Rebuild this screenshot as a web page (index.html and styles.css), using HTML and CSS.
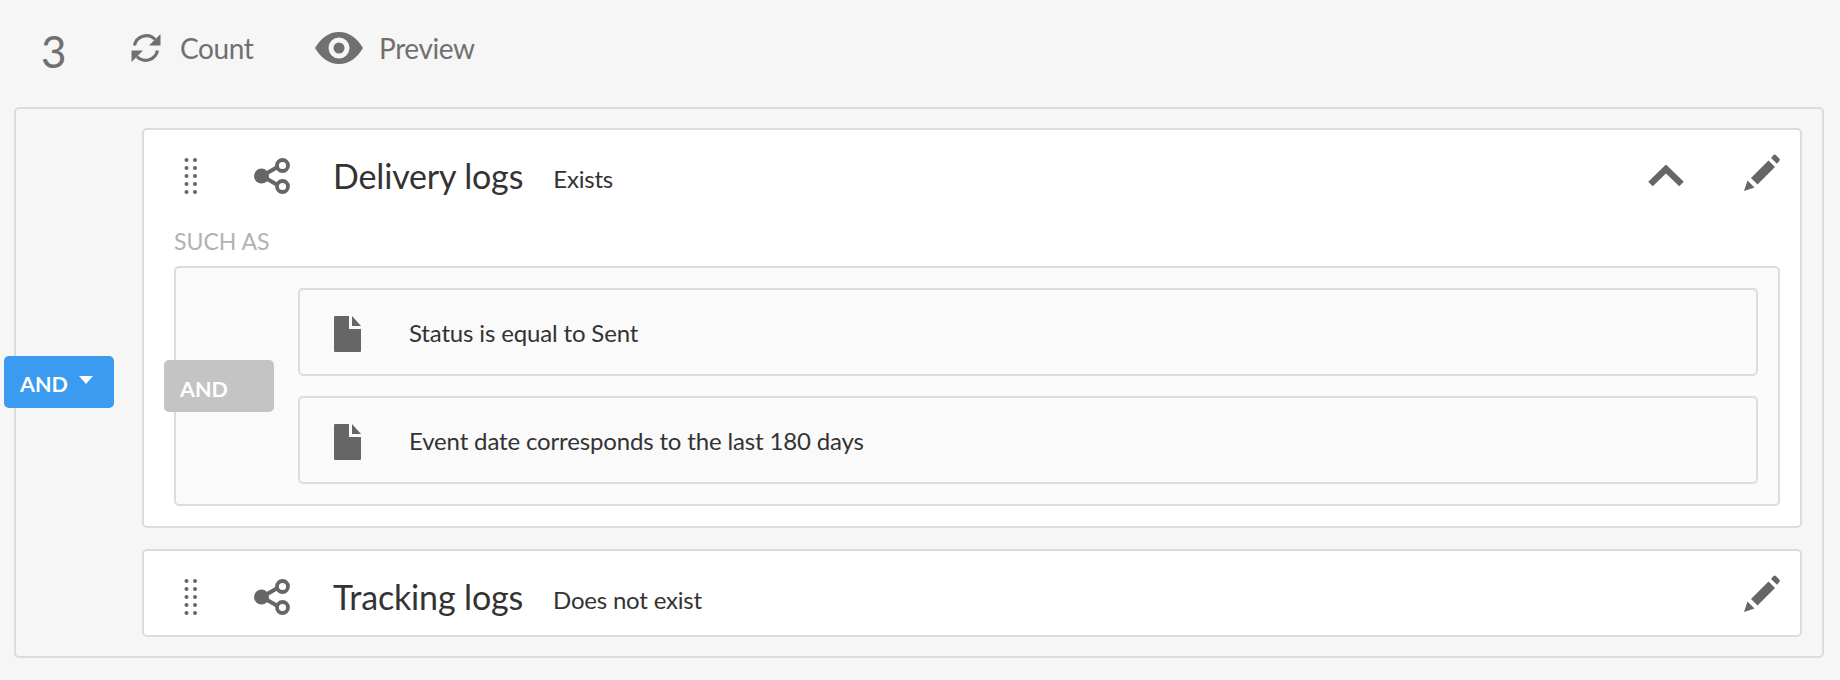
FILE: index.html
```html
<!DOCTYPE html>
<html lang="en">
<head>
<meta charset="utf-8">
<title>Query</title>
<link rel="stylesheet" href="styles.css">
</head>
<body>
<svg class="defs" width="0" height="0" aria-hidden="true">
  <defs>
    <symbol id="i-share" viewBox="0 0 36 36">
      <path d="M8 18 L27 7 M8 18 L27 29" fill="none" stroke="#666" stroke-width="4"/>
      <circle cx="7.500" cy="18" r="7.500" fill="#666"/>
      <circle cx="28.500" cy="7.500" r="5.500" fill="#fff" stroke="#666" stroke-width="3.800"/>
      <circle cx="28.500" cy="28.500" r="5.500" fill="#fff" stroke="#666" stroke-width="3.800"/>
    </symbol>
    <symbol id="i-pencil" viewBox="0 0 36 37">
      <path fill="#666" d="M0 37 L3.500 26.500 L10.500 33.500 Z"/>
      <path fill="#666" d="M7 24 L24.500 6.500 L31 13 L13.500 30.500 Z"/>
      <path fill="#666" d="M27 4 L29.500 1 Q30.500 0 31.800 1 L35.300 4.500 Q36.300 5.800 35.300 7 L33 9.800 Z"/>
    </symbol>
    <symbol id="i-doc" viewBox="0 0 27 36">
      <path fill="#666" d="M1 0 H15 V13 H27 V35 Q27 36 26 36 H1 Q0 36 0 35 V1 Q0 0 1 0 Z"/>
      <path fill="#666" d="M18 0 L27 10 H18 Z"/>
    </symbol>
    <symbol id="i-dots" viewBox="0 0 14 38">
      <g fill="#666">
        <circle cx="2.500" cy="3" r="2"/><circle cx="11" cy="3" r="2"/>
        <circle cx="2.500" cy="11" r="2"/><circle cx="11" cy="11" r="2"/>
        <circle cx="2.500" cy="19" r="2"/><circle cx="11" cy="19" r="2"/>
        <circle cx="2.500" cy="27" r="2"/><circle cx="11" cy="27" r="2"/>
        <circle cx="2.500" cy="35" r="2"/><circle cx="11" cy="35" r="2"/>
      </g>
    </symbol>
  </defs>
</svg>

<header class="toolbar">
  <span class="count-value">3</span>
  <button class="tool tool-count" type="button">
    <svg class="icon-refresh" width="30" height="30" viewBox="0 0 30 30" aria-hidden="true">
      <path d="M3.500 12.500 A12 12 0 0 1 24 6.500" fill="none" stroke="#707070" stroke-width="3.200"/>
      <path fill="#707070" d="M29.500 1 V12.500 H18 Z"/>
      <path d="M26.500 17.500 A12 12 0 0 1 6 23.500" fill="none" stroke="#707070" stroke-width="3.200"/>
      <path fill="#707070" d="M0.500 29 V17.500 H12 Z"/>
    </svg>
    <span>Count</span>
  </button>
  <button class="tool tool-preview" type="button">
    <svg class="icon-eye" width="48" height="32" viewBox="0 0 48 32" aria-hidden="true">
      <path fill="#707070" fill-rule="evenodd" d="M0 16 C6 6 14 0 24 0 C34 0 42 6 48 16 C42 26 34 32 24 32 C14 32 6 26 0 16 Z M24 5.500 A10.500 10.500 0 1 0 24 26.500 A10.500 10.500 0 1 0 24 5.500 Z"/>
      <circle cx="24" cy="16" r="5.500" fill="#707070"/>
    </svg>
    <span>Preview</span>
  </button>
</header>

<main class="group">
  <button class="op op-blue" type="button">AND
    <svg class="caret" width="14" height="8" viewBox="0 0 14 8" aria-hidden="true"><path fill="#fff" d="M0 0 H14 L7 8 Z"/></svg>
  </button>

  <section class="card">
    <div class="card-head">
      <svg class="dots"><use href="#i-dots"/></svg>
      <svg class="share"><use href="#i-share"/></svg>
      <h2 class="title">Delivery logs</h2>
      <span class="state">Exists</span>
      <svg class="chevron" width="36" height="22" viewBox="0 0 36 22" aria-hidden="true"><path d="M2.500 19 L18 4 L33.500 19" fill="none" stroke="#666" stroke-width="6.500"/></svg>
      <svg class="pencil"><use href="#i-pencil"/></svg>
    </div>
    <div class="such">SUCH AS</div>
    <div class="subgroup">
      <div class="op op-grey">AND</div>
      <div class="rule">
        <svg class="doc"><use href="#i-doc"/></svg>
        <span class="rule-text">Status is equal to Sent</span>
      </div>
      <div class="rule">
        <svg class="doc"><use href="#i-doc"/></svg>
        <span class="rule-text">Event date corresponds to the last 180 days</span>
      </div>
    </div>
  </section>

  <section class="card card-solo">
    <div class="card-head">
      <svg class="dots"><use href="#i-dots"/></svg>
      <svg class="share"><use href="#i-share"/></svg>
      <h2 class="title">Tracking logs</h2>
      <span class="state">Does not exist</span>
      <svg class="pencil pencil-solo"><use href="#i-pencil"/></svg>
    </div>
  </section>
</main>
</body>
</html>
```
FILE: styles.css
```css
* { box-sizing: border-box; }
html, body { margin: 0; padding: 0; }
body {
  width: 1840px;
  height: 680px;
  overflow: hidden;
  background: #f6f6f6;
  font-family: Lato, "Open Sans", sans-serif;
  color: #333;
}
.defs { position: absolute; }

.toolbar {
  display: flex;
  align-items: center;
  height: 107px;
  padding: 0 0 11px 41px;
}
.count-value {
  width: 90px;
  font-size: 44px;
  line-height: 1;
  color: #707070;
  padding-top: 6px;
}
.tool {
  display: flex;
  align-items: center;
  border: 0;
  padding: 0;
  background: none;
  font: inherit;
  font-size: 28px;
  letter-spacing: -0.4px;
  color: #707070;
}
.tool-count { gap: 19px; width: 184px; }
.tool-preview { gap: 16px; }

.group {
  position: relative;
  display: flex;
  flex-direction: column;
  gap: 21px;
  width: 1810px;
  height: 551px;
  margin-left: 14px;
  padding: 19px 20px 20px 126px;
  border: 2px solid #dcdcdc;
  border-radius: 5px;
  background: #f6f6f6;
}

.op {
  position: absolute;
  display: flex;
  align-items: center;
  width: 110px;
  height: 52px;
  border: 0;
  border-radius: 5px;
  padding: 4px 0 0 16px;
  font: inherit;
  font-size: 21.5px;
  font-weight: 700;
  color: #fff;
}
.op-blue { left: -12px; top: 247px; background: #3a9bf0; gap: 11px; }
.caret { margin-top: -8px; }
.op-grey { left: -12px; top: 92px; background: #c4c4c4; padding-top: 5px; }

.card {
  background: #fff;
  border: 2px solid #dcdcdc;
  border-radius: 5px;
  padding: 0 20px 20px 30px;
}
.card-solo { padding-bottom: 6px; }
.card-head {
  display: flex;
  align-items: center;
  height: 65px;
  margin-top: 13px;
}
.dots { width: 14px; height: 38px; margin-left: 10px; flex: none; }
.share { width: 36px; height: 36px; margin-left: 56px; flex: none; }
.title {
  margin: 0 0 0 43px;
  font-size: 34px;
  font-weight: 400;
  letter-spacing: -0.15px;
  color: #333;
  line-height: 1;
}
.state {
  margin-left: 30px;
  font-size: 24px;
  letter-spacing: -0.2px;
  color: #333;
  padding-top: 6px;
}
.chevron { margin-left: auto; margin-right: 60px; flex: none; }
.pencil { width: 36px; height: 37px; flex: none; margin-top: -6px; }
.pencil-solo { margin-left: auto; }

.such {
  margin-top: 19px;
  font-size: 23px;
  line-height: 28px;
  color: #b2b2b2;
}
.subgroup {
  position: relative;
  display: flex;
  flex-direction: column;
  gap: 20px;
  margin-top: 11px;
  padding: 20px 20px 20px 122px;
  background: #fafafa;
  border: 2px solid #dcdcdc;
  border-radius: 5px;
}
.rule {
  display: flex;
  align-items: center;
  height: 88px;
  padding-left: 34px;
  background: #fafafa;
  border: 2px solid #dcdcdc;
  border-radius: 5px;
}
.doc { width: 27px; height: 36px; flex: none; margin-top: 4px; }
.rule-text { margin-left: 48px; font-size: 24px; letter-spacing: -0.15px; color: #333; }
```
